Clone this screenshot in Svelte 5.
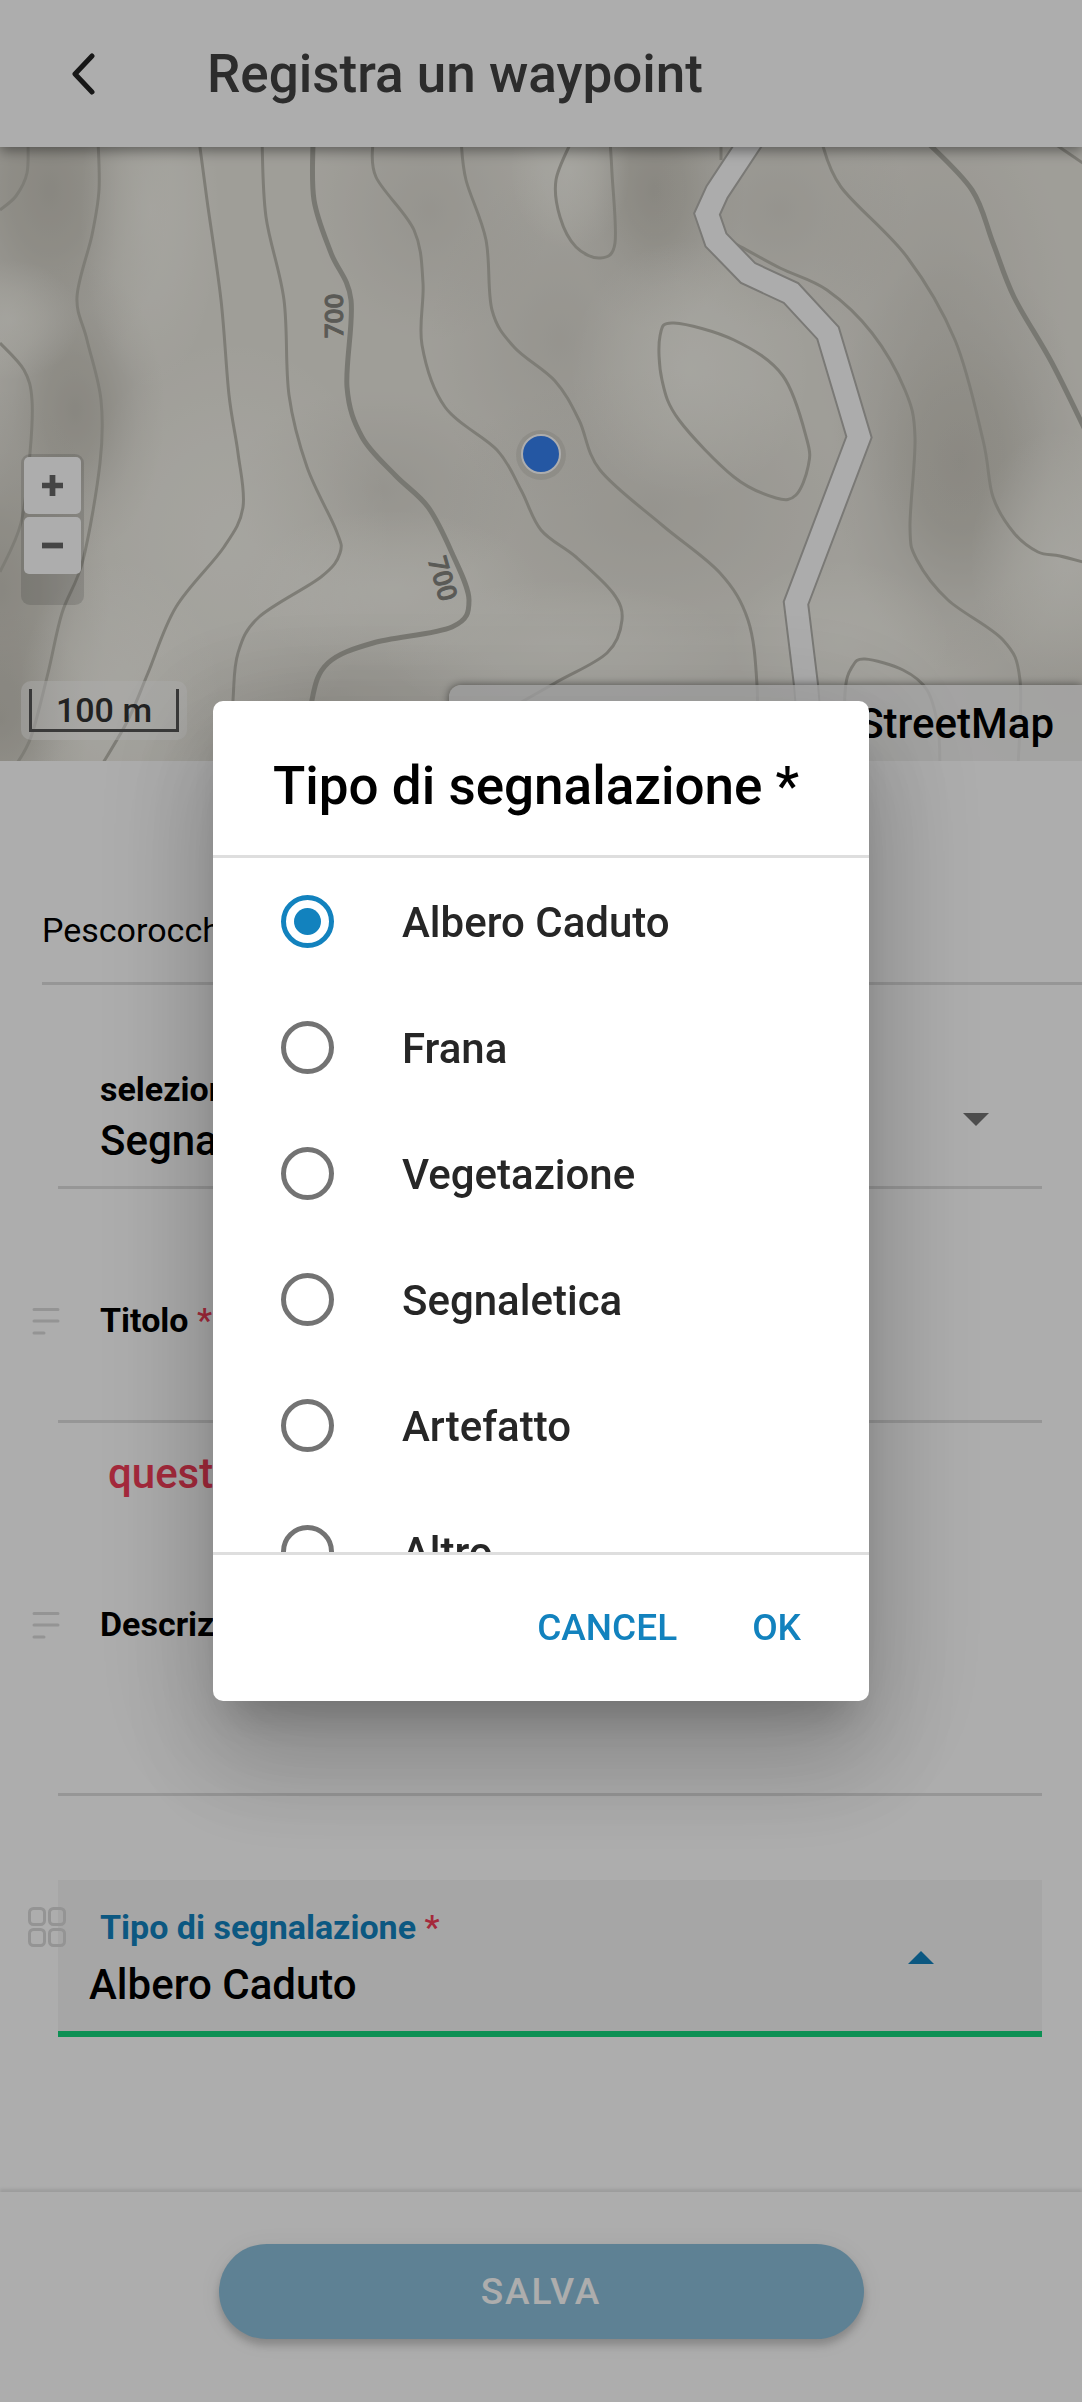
<script>
  const options = [
    'Albero Caduto',
    'Frana',
    'Vegetazione',
    'Segnaletica',
    'Artefatto',
    'Altro'
  ];
  let selected = $state('Albero Caduto');

  // Contour lines as lists of x,y points; drawn as smooth curves.
  const contours = [
    { p: [28, 140, 27, 173, 16, 196, 0, 210] },
    { p: [98, 140, 99, 190, 92, 235, 77, 297, 87, 340, 101, 400, 100, 463, 83, 560, 62, 613, 48, 673, 31, 737, 14, 768] },
    { p: [0, 343, 24, 370, 32, 400, 30, 453, 21, 523, 0, 572] },
    { p: [199, 140, 207, 200, 221, 300, 229, 395, 238, 453, 243, 507, 224, 547, 176, 607, 148, 673, 128, 720, 100, 768] },
    { p: [262, 140, 266, 217, 284, 300, 289, 395, 307, 467, 336, 530, 340, 553, 321, 577, 259, 617, 238, 653, 233, 700, 230, 768] },
    { thick: true, p: [313, 140, 314, 200, 331, 253, 351, 300, 347, 387, 362, 437, 395, 475, 428, 507, 452, 553, 469, 600, 452, 627, 373, 643, 328, 663, 312, 700, 308, 768] },
    { p: [373, 140, 376, 177, 414, 230, 423, 283, 422, 345, 445, 407, 497, 450, 521, 490, 541, 530, 576, 557, 613, 593, 622, 620, 607, 653, 555, 683, 490, 720] },
    { p: [461, 140, 466, 180, 486, 240, 492, 310, 514, 347, 555, 381, 579, 420, 600, 470, 662, 525, 720, 573, 748, 620, 757, 685, 757, 768] },
    { p: [572, 140, 556, 180, 560, 217, 576, 247, 600, 258, 615, 243, 612, 173, 610, 140] },
    { p: [721, 140, 721, 160] },
    { closed: true, p: [660, 336, 674, 323, 734, 340, 783, 376, 807, 440, 808, 467, 796, 495, 776, 498, 734, 477, 679, 420, 662, 380] },
    { p: [734, 243, 780, 268, 827, 290, 872, 333, 905, 390, 915, 437, 910, 527, 917, 560, 948, 600, 1003, 640, 1020, 680, 1018, 768] },
    { p: [821, 140, 841, 187, 907, 257, 955, 340, 983, 440, 993, 497, 1014, 533, 1038, 552, 1060, 556, 1090, 564] },
    { thick: true, p: [925, 140, 972, 190, 993, 243, 1014, 297, 1052, 363, 1090, 440] },
    { p: [1052, 142, 1090, 168] },
    { p: [845, 768, 845, 693, 852, 667, 865, 659, 903, 670, 927, 690, 938, 727, 940, 768] }
  ];

  const road = 'M756 133 L717 192 L707 214 L716 240 L748 273 L791 293 L828 333 L859 437 L796 603 L806 685 L813 768';

  // Hill shading: centre, radii and tone of each soft patch.
  const shades = [
    [50, 190, 120, 190, 'dark'],
    [75, 410, 90, 150, 'dark'],
    [0, 590, 110, 200, 'dark'],
    [0, 720, 90, 110, 'dark'],
    [10, 320, 70, 60, 'light'],
    [655, 190, 90, 140, 'dark'],
    [430, 210, 120, 130, 'mid'],
    [380, 490, 150, 100, 'mid'],
    [560, 340, 130, 170, 'mid'],
    [650, 510, 210, 140, 'mid'],
    [960, 460, 130, 210, 'dark'],
    [940, 310, 130, 220, 'mid'],
    [780, 210, 130, 120, 'mid'],
    [1070, 690, 140, 120, 'mid'],
    [320, 700, 200, 80, 'mid'],
    [150, 210, 70, 180, 'light'],
    [230, 540, 160, 200, 'light'],
    [390, 590, 150, 80, 'light'],
    [120, 690, 100, 130, 'light'],
    [570, 170, 60, 80, 'light'],
    [690, 370, 120, 130, 'light'],
    [560, 650, 180, 70, 'light'],
    [840, 640, 110, 80, 'light'],
    [1060, 560, 90, 130, 'light']
  ];

  function curve({ p, closed }) {
    const n = p.length / 2;
    const at = (i) => {
      const k = closed ? (i + n) % n : Math.min(n - 1, Math.max(0, i));
      return [p[2 * k], p[2 * k + 1]];
    };
    let d = `M${p[0]} ${p[1]}`;
    for (let i = 0; i < (closed ? n : n - 1); i++) {
      const [a, b, c, e] = [at(i - 1), at(i), at(i + 1), at(i + 2)];
      d += ` C${b[0] + (c[0] - a[0]) / 6} ${b[1] + (c[1] - a[1]) / 6} ${c[0] - (e[0] - b[0]) / 6} ${c[1] - (e[1] - b[1]) / 6} ${c[0]} ${c[1]}`;
    }
    return d;
  }
</script>

{#snippet linesIcon()}
  <svg class="item-icon lines" viewBox="0 0 28 28" aria-hidden="true">
    <path d="M2 2.5h24M2 14h24M2 26h10" />
  </svg>
{/snippet}

<div class="page">
  <header class="toolbar">
    <button class="back" type="button" aria-label="Indietro">
      <svg viewBox="0 0 24 42" aria-hidden="true"><path d="M21 3 L4 21 L21 39" /></svg>
    </button>
    <h1>Registra un waypoint</h1>
  </header>

  <section class="map" aria-label="Mappa">
    <svg class="terrain" viewBox="0 147 1082 614" preserveAspectRatio="xMidYMid slice" aria-hidden="true">
      <defs>
        <radialGradient id="dark"><stop offset="0" stop-color="#c2bfb5" stop-opacity=".8" /><stop offset=".35" stop-color="#c2bfb5" stop-opacity=".6" /><stop offset=".7" stop-color="#c2bfb5" stop-opacity=".2" /><stop offset="1" stop-color="#c2bfb5" stop-opacity="0" /></radialGradient>
        <radialGradient id="mid"><stop offset="0" stop-color="#d4d1c8" stop-opacity=".6" /><stop offset=".5" stop-color="#d4d1c8" stop-opacity=".3" /><stop offset="1" stop-color="#d4d1c8" stop-opacity="0" /></radialGradient>
        <radialGradient id="light"><stop offset="0" stop-color="#fbfaf2" stop-opacity=".6" /><stop offset=".5" stop-color="#fbfaf2" stop-opacity=".35" /><stop offset="1" stop-color="#fbfaf2" stop-opacity="0" /></radialGradient>
      </defs>
      <rect y="147" width="1082" height="614" fill="#ebe9e1" />
      {#each shades as [cx, cy, rx, ry, tone]}
        <ellipse {cx} {cy} {rx} {ry} fill="url(#{tone})" />
      {/each}
      {#each contours as c}
        <path class="contour" class:thick={c.thick} d={curve(c)} />
      {/each}
      <path class="road-edge" d={road} />
      <path class="road" d={road} />
      <text class="elevation" transform="translate(343 316) rotate(-90)">700</text>
      <text class="elevation" transform="translate(434 581) rotate(74)">700</text>
      <circle class="halo" cx="541" cy="455" r="25" />
      <circle class="position" cx="541" cy="454" r="19" />
    </svg>
    <div class="zoom">
      <button type="button" aria-label="Ingrandisci"><svg viewBox="0 0 22 22" aria-hidden="true"><path d="M0 11h22M11 0v22" /></svg></button>
      <button type="button" aria-label="Riduci"><svg viewBox="0 0 22 22" aria-hidden="true"><path d="M0 11h22" /></svg></button>
    </div>
    <div class="scale"><span>100 m</span></div>
    <div class="attribution">© MapTiler © OpenStreetMap</div>
  </section>

  <form class="form" onsubmit={(e) => e.preventDefault()}>
    <p class="place">Pescorocchiano</p>

    <div class="item kind">
      <label for="kind">seleziona un tipo</label>
      <select id="kind"><option>Segnalazione</option></select>
      <svg class="caret" viewBox="0 0 26 13" aria-hidden="true"><path d="M0 0h26L13 13z" /></svg>
    </div>

    <div class="item title">
      {@render linesIcon()}
      <label for="title">Titolo <em>*</em></label>
      <input id="title" type="text" />
    </div>
    <p class="error">questo campo è obbligatorio</p>

    <div class="item description">
      {@render linesIcon()}
      <label for="description">Descrizione</label>
      <textarea id="description"></textarea>
    </div>

    <div class="item report">
      <svg class="item-icon grid" viewBox="0 0 38 40" aria-hidden="true">
        <rect x="1.5" y="1.5" width="15" height="16" rx="4" /><rect x="21.5" y="1.5" width="15" height="16" rx="4" />
        <rect x="1.5" y="22.5" width="15" height="16" rx="4" /><rect x="21.5" y="22.5" width="15" height="16" rx="4" />
      </svg>
      <label for="report">Tipo di segnalazione <em>*</em></label>
      <select id="report" bind:value={selected}>
        {#each options as option}<option>{option}</option>{/each}
      </select>
      <svg class="caret" viewBox="0 0 26 13" aria-hidden="true"><path d="M0 13h26L13 0z" /></svg>
    </div>
  </form>

  <footer class="actions">
    <button class="save" type="button">SALVA</button>
  </footer>
</div>

<div class="backdrop">
  <div class="dialog" role="dialog" aria-modal="true" aria-labelledby="dialog-title">
    <h2 id="dialog-title">Tipo di segnalazione *</h2>
    <div class="options">
      {#each options as option}
        <label class="option">
          <input type="radio" name="report-kind" value={option} bind:group={selected} />
          <span>{option}</span>
        </label>
      {/each}
    </div>
    <div class="buttons">
      <button type="button">CANCEL</button>
      <button type="button">OK</button>
    </div>
  </div>
</div>

<style>
  :global(body) {
    margin: 0;
    background: #fff;
  }

  .page,
  .backdrop {
    font-family: Roboto, 'Liberation Sans', sans-serif;
    font-size: 42px;
    line-height: 56px;
    font-weight: 500;
    color: #000;
  }

  .page *,
  .backdrop * {
    box-sizing: border-box;
  }

  button,
  input,
  select,
  textarea {
    margin: 0;
    padding: 0;
    border: 0;
    border-radius: 0;
    background: none;
    font: inherit;
    color: inherit;
    appearance: none;
    outline: none;
  }

  h1,
  h2,
  p {
    margin: 0;
    font-weight: 500;
  }

  .page {
    display: flex;
    flex-direction: column;
    min-height: 100vh;
  }

  .toolbar {
    position: relative;
    z-index: 1;
    display: flex;
    align-items: center;
    gap: 80px;
    height: 147px;
    flex: none;
    box-sizing: border-box;
    padding: 0 52px 0 67px;
    background: #fff;
    box-shadow: 0 4px 12px rgba(0, 0, 0, 0.4);
  }

  .back {
    display: flex;
    justify-content: center;
    width: 60px;
  }

  .back svg {
    width: 24px;
    height: 42px;
    margin-right: 28px;
    fill: none;
    stroke: #222;
    stroke-width: 5;
    stroke-linecap: round;
    stroke-linejoin: round;
  }

  .toolbar h1 {
    font-size: 53px;
    line-height: 60px;
    color: #424242;
  }

  .map {
    position: relative;
    height: 614px;
    flex: none;
    overflow: hidden;
  }

  .terrain {
    display: block;
    width: 100%;
    height: 100%;
  }

  .contour {
    fill: none;
    stroke: #bab8af;
    stroke-width: 3;
  }

  .contour.thick {
    stroke: #b2b1a8;
    stroke-width: 5;
  }

  .road-edge,
  .road {
    fill: none;
    stroke: #b4b3ae;
    stroke-width: 26;
  }

  .road {
    stroke: #fefefe;
    stroke-width: 22;
  }

  .elevation {
    font-family: 'Noto Sans', sans-serif;
    font-size: 26px;
    font-weight: 500;
    text-anchor: middle;
    fill: #85857f;
    stroke: #85857f;
    stroke-width: 1;
  }

  .halo {
    fill: #000;
    opacity: 0.07;
  }

  .position {
    fill: #3680f0;
    stroke: #fff;
    stroke-width: 2;
  }

  .zoom {
    position: absolute;
    left: 21px;
    top: 307px;
    display: flex;
    flex-direction: column;
    gap: 3px;
    padding: 3px 3px 31px;
    border-radius: 9px;
    background: rgba(0, 0, 0, 0.12);
  }

  .zoom button {
    display: flex;
    align-items: center;
    justify-content: center;
    width: 57px;
    height: 57px;
    border-radius: 5px;
    background: #fff;
  }

  .zoom svg {
    width: 21px;
    height: 21px;
    stroke: #666;
    stroke-width: 6;
  }

  .scale {
    position: absolute;
    left: 21px;
    bottom: 21px;
    padding: 8px;
    border-radius: 10px;
    background: rgba(255, 255, 255, 0.45);
  }

  .scale span {
    display: block;
    width: 150px;
    height: 43px;
    border: 3px solid #555;
    border-top: 0;
    font-size: 34px;
    line-height: 42px;
    text-align: center;
    color: #333;
  }

  .attribution {
    position: absolute;
    right: 0;
    bottom: 0;
    padding: 11px 28px 9px 46px;
    border-radius: 12px 0 0 0;
    background: rgba(244, 244, 244, 0.8);
    box-shadow: 0 0 8px rgba(0, 0, 0, 0.5);
  }

  .form {
    flex: 1;
  }

  .place {
    margin-left: 42px;
    padding: 147px 0 30px;
    border-bottom: 3px solid #dedede;
    font-size: 34px;
    line-height: 44px;
    font-weight: 400;
  }

  .item {
    position: relative;
    display: flex;
    flex-direction: column;
    margin: 0 40px 0 58px;
    padding-left: 42px;
    border-bottom: 3px solid #dedede;
  }

  .item label {
    font-size: 34px;
    line-height: 44px;
    font-weight: 700;
  }

  em {
    font-style: normal;
    font-weight: 500;
    color: #f33d58;
  }

  .item select,
  .item input,
  .item textarea {
    width: 100%;
    height: 56px;
    resize: none;
  }

  .item-icon {
    position: absolute;
    fill: none;
    stroke: #dadada;
    stroke-width: 3;
    stroke-linecap: round;
  }

  .lines {
    left: -26px;
    width: 28px;
    height: 28px;
    margin-top: 9px;
  }

  .grid {
    left: -30px;
    top: 27px;
    width: 38px;
    height: 40px;
  }

  .caret {
    position: absolute;
    right: 53px;
    bottom: 60px;
    width: 26px;
    height: 13px;
    fill: #737373;
  }

  .kind {
    gap: 2px;
    padding-top: 82px;
    padding-bottom: 17px;
  }

  .title {
    padding-top: 109px;
  }

  .title input {
    height: 78px;
  }

  .error {
    padding: 23px 40px 100px 108px;
    color: #f33d58;
  }

  .description textarea {
    height: 147px;
  }

  .report {
    gap: 8px;
    margin-top: 84px;
    padding: 25px 0 18px 31px;
    border-bottom: 6px solid #14d47d;
    background: #f5f5f5;
  }

  .report label {
    padding-left: 11px;
    color: #1282be;
  }

  .report .caret {
    right: 108px;
    bottom: 67px;
    fill: #1282be;
  }

  .actions {
    display: flex;
    justify-content: center;
    padding: 52px 0 63px;
    box-shadow: 0 -3px 3px rgba(0, 0, 0, 0.1);
  }

  .save {
    width: 60%;
    max-width: 645px;
    height: 95px;
    border-radius: 48px;
    background: #8bbfda;
    box-shadow: 0 6px 8px rgba(0, 0, 0, 0.2), 0 2px 24px rgba(0, 0, 0, 0.06);
    font-size: 37px;
    letter-spacing: 2px;
    color: #fff;
  }

  .backdrop {
    position: fixed;
    inset: 0;
    z-index: 10;
    display: flex;
    align-items: center;
    justify-content: center;
    background: rgba(0, 0, 0, 0.32);
  }

  .dialog {
    display: flex;
    flex-direction: column;
    width: 90%;
    max-width: 656px;
    max-height: min(90%, 1000px);
    overflow: hidden;
    border-radius: 10px;
    background: #fff;
    box-shadow:
      0 29px 39px -18px rgba(0, 0, 0, 0.2),
      0 63px 100px 8px rgba(0, 0, 0, 0.14),
      0 24px 121px 21px rgba(0, 0, 0, 0.12);
  }

  .dialog h2 {
    padding: 55px 60px 39px;
    border-bottom: 3px solid #dedede;
    font-size: 53px;
    line-height: 60px;
  }

  .options {
    flex: 1 1 auto;
    min-height: 0;
    overflow-y: auto;
    scrollbar-width: none;
  }

  .option {
    display: flex;
    align-items: center;
    gap: 68px;
    height: 126px;
    padding: 0 68px;
    color: #262626;
  }

  .option span {
    padding-top: 3px;
  }

  .option input {
    display: grid;
    place-items: center;
    width: 53px;
    height: 53px;
    flex: none;
    border: 5px solid #737373;
    border-radius: 50%;
  }

  .option input:checked {
    border-color: #1282be;
  }

  .option input:checked::before {
    content: '';
    width: 27px;
    height: 27px;
    border-radius: 50%;
    background: #1282be;
  }

  .buttons {
    display: flex;
    align-items: center;
    justify-content: flex-end;
    gap: 33px;
    height: 149px;
    flex: none;
    padding: 0 47px;
    border-top: 3px solid #dedede;
  }

  .buttons button {
    padding: 10px 21px;
    font-size: 37px;
    color: #1282be;
  }
</style>
